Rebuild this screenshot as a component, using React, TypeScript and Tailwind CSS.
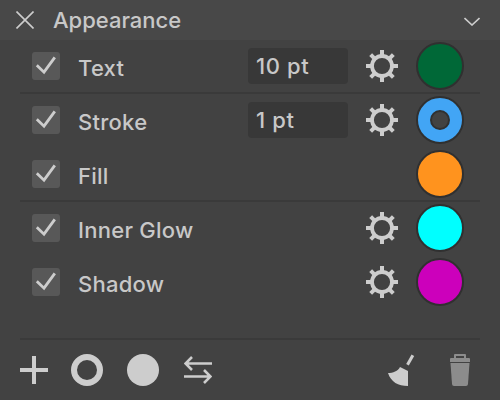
import React from 'react';

const rows = [
  { name: 'Text', value: '10 pt', gear: true, color: 'bg-[#006837]', line: true },
  { name: 'Stroke', value: '1 pt', gear: true, color: 'bg-[#42a5f5]', ring: true },
  { name: 'Fill', color: 'bg-[#ff931e]', line: true },
  { name: 'Inner Glow', gear: true, color: 'bg-[#00ffff]' },
  { name: 'Shadow', gear: true, color: 'bg-[#cc00bb]' },
];

function Gear() {
  const teeth = [0, 45, 90, 135, 180, 225, 270, 315];
  return (
    <svg width="32" height="32" viewBox="0 0 32 32" className="text-[#cdcdcd] block">
      <circle cx="16" cy="16" r="10" fill="none" stroke="currentColor" strokeWidth="3.8" />
      {teeth.map((a) => (
        <rect key={a} x="14" y="0" width="4" height="6" fill="currentColor" transform={`rotate(${a} 16 16)`} />
      ))}
    </svg>
  );
}

function Check() {
  return (
    <div className="w-7 h-7 rounded-[3px] bg-[#585858] flex items-center justify-center">
      <svg width="28" height="28" viewBox="0 0 28 28" fill="none">
        <path d="M4.8 13.2 L12 20.2 L22.8 5.4" stroke="#cdcdcd" strokeWidth="2.8" />
      </svg>
    </div>
  );
}

export default function App() {
  return (
    <div className="w-[500px] h-[400px] bg-[#424242] overflow-hidden font-['Inter',sans-serif] text-[#c8c8c8]">
      <header className="h-10 bg-[#484848] flex items-center pl-4 pr-[20px]">
        <svg width="18" height="18" viewBox="0 0 18 18" fill="none" stroke="#cdcdcd" strokeWidth="1.6">
          <path d="M0.5 0.5 L17.5 17.5 M17.5 0.5 L0.5 17.5" />
        </svg>
        <span className="ml-[19px] text-[22px] font-medium">Appearance</span>
        <svg width="16" height="9" viewBox="0 0 16 9" fill="none" stroke="#cdcdcd" strokeWidth="1.6" className="ml-auto mt-[2px]">
          <path d="M0.5 1 L8 8 L15.5 1" />
        </svg>
      </header>
      <div className="mx-5">
        {rows.map((r) => (
          <div key={r.name} className={`h-[54px] flex items-center pl-3 pr-[16px] border-b-2 ${r.line ? 'border-[#3a3a3a]' : 'border-transparent'}`}>
            <Check />
            <span className="ml-[18px] pt-1 text-[22px] font-medium tracking-[0.25px]">{r.name}</span>
            {r.value && (
              <div className="ml-auto w-[100px] h-9 rounded-[4px] bg-[#383838] flex items-center pl-2 text-[22px] font-medium tracking-[0.6px]">{r.value}</div>
            )}
            {r.gear && (
              <div className={r.value ? 'ml-[18px]' : 'ml-auto'}>
                <Gear />
              </div>
            )}
            <div className={`${r.gear ? 'ml-[18px]' : 'ml-auto'} w-12 h-12 rounded-full border-2 border-[#303030] ${r.color} flex items-center justify-center`}>
              {r.ring && <div className="w-5 h-5 rounded-full bg-[#424242] border-2 border-[#303030]" />}
            </div>
          </div>
        ))}
        <div className="mt-[28px] border-t-2 border-[#3a3a3a] pt-[14px] flex items-center text-[#cdcdcd]">
          <svg width="28" height="28" viewBox="0 0 28 28" fill="currentColor">
            <path d="M12 0 H16 V12 H28 V16 H16 V28 H12 V16 H0 V12 H12 Z" />
          </svg>
          <div className="ml-[23px] w-8 h-8 rounded-full border-[6px] border-[#cdcdcd]" />
          <div className="ml-6 w-8 h-8 rounded-full bg-[#cdcdcd]" />
          <svg width="28" height="28" viewBox="0 0 28 28" fill="none" stroke="currentColor" strokeWidth="2.6" className="ml-[25px]">
            <path d="M1 7.5 H28 M8 1 L1.5 7.5 L8 14 M0 20.5 H27 M20 14 L26.5 20.5 L20 27" />
          </svg>
          <svg width="28" height="32" viewBox="0 0 28 32" fill="currentColor" className="ml-auto">
            <path d="M23.5 0.5 L26.2 2 L20.8 11.5 L18.2 10 Z" />
            <path d="M12 13 L20 17 L20 32 C10 32 3 28 0 19 C5 19 10 17 12 13 Z" />
          </svg>
          <svg width="20" height="32" viewBox="0 0 20 32" fill="#8c8c8c" className="ml-[34px] mr-2.5">
            <path fillRule="evenodd" d="M5 0 H15 Q16 0 16 1 V4 H19 Q20 4 20 5 V8 H0 V5 Q0 4 1 4 H4 V1 Q4 0 5 0 Z M6 2 V4 H14 V2 Z" />
            <path d="M0.5 9 H19.5 L18 30 Q17.8 32 16 32 H4 Q2.2 32 2 30 Z" />
          </svg>
        </div>
      </div>
    </div>
  );
}
